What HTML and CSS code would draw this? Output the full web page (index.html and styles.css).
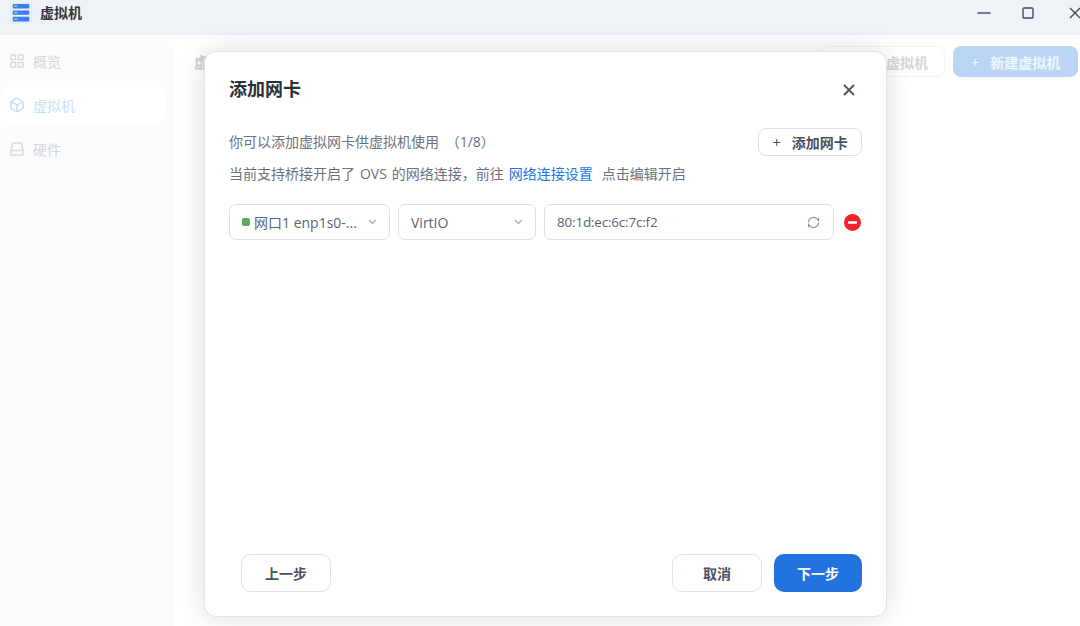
FILE: index.html
```html
<!DOCTYPE html>
<html lang="zh-CN">
<head>
<meta charset="utf-8">
<title>虚拟机</title>
<link rel="stylesheet" href="styles.css">
</head>
<body>
<div class="app">
  <header class="titlebar">
    <div class="brand">
      <span class="logo">
        <svg width="24" height="22" viewBox="0 0 24 22"><rect width="24" height="22" rx="5" fill="#e9eff9"/><rect x="3.700" y="2" width="16.600" height="4.400" rx="1" fill="#3f7cf8"/><rect x="3.700" y="8.400" width="16.600" height="4.400" rx="1" fill="#3f7cf8"/><rect x="3.700" y="14.800" width="16.600" height="4.800" rx="1" fill="#3f7cf8"/><rect x="5" y="3.500" width="3.500" height="1.400" fill="#86d6b0"/><rect x="5" y="9.900" width="3.500" height="1.400" fill="#86d6b0"/><rect x="5" y="16.500" width="3.500" height="1.400" fill="#86d6b0"/></svg>
      </span>
      <span class="brand-name">虚拟机</span>
    </div>
    <div class="win-controls">
      <svg class="win-min" width="14" height="14" viewBox="0 0 14 14"><path d="M0.500 7h13" stroke="#444b55" stroke-width="1.400" fill="none"/></svg>
      <svg class="win-max" width="12" height="12" viewBox="0 0 12 12"><rect x="1" y="1" width="10" height="10" rx="1" stroke="#444b55" stroke-width="1.400" fill="none"/></svg>
      <svg class="win-close" width="12" height="12" viewBox="0 0 12 12"><path d="M1 1l10 10M11 1L1 11" stroke="#444b55" stroke-width="1.400" fill="none"/></svg>
    </div>
  </header>
  <div class="body">
    <nav class="sidebar">
      <a class="nav-item">
        <svg width="14" height="14" viewBox="0 0 14 14" fill="none" stroke="#d8d9db" stroke-width="1.400"><rect x="1" y="1" width="4.600" height="4.600"/><rect x="8.400" y="1" width="4.600" height="4.600"/><rect x="1" y="8.400" width="4.600" height="4.600"/><rect x="8.400" y="8.400" width="4.600" height="4.600"/></svg>
        <span>概览</span>
      </a>
      <a class="nav-item active">
        <svg width="14" height="16" viewBox="0 0 14 16" fill="none" stroke="#c5dcf7" stroke-width="1.400" stroke-linejoin="round"><path d="M7 1l6 3.500v7L7 15l-6-3.500v-7z"/><path d="M1 4.500L7 8l6-3.500M7 8v7"/></svg>
        <span>虚拟机</span>
      </a>
      <a class="nav-item">
        <svg width="14" height="14" viewBox="0 0 14 14" fill="none" stroke="#d8d9db" stroke-width="1.400" stroke-linejoin="round"><path d="M2.500 1h9L13 8.500V13H1V8.500z"/><path d="M1 8.500h12"/></svg>
        <span>硬件</span>
      </a>
    </nav>
    <main class="content">
      <div class="toolbar">
        <span class="page-title">虚拟机</span>
        <div class="toolbar-actions">
          <button class="ghost-btn">导入虚拟机</button>
          <button class="new-btn"><span class="plus">+</span>新建虚拟机</button>
        </div>
      </div>
    </main>
  </div>
  <section class="modal">
    <div class="modal-head">
      <h2>添加网卡</h2>
      <svg class="close" width="12" height="12" viewBox="0 0 12 12"><path d="M1 1l10 10M11 1L1 11" stroke="#4a5361" stroke-width="1.800" fill="none"/></svg>
    </div>
    <div class="intro-row">
      <p class="intro">你可以添加虚拟网卡供虚拟机使用 （1/8）</p>
      <button class="add-btn"><span class="add-plus">+</span>添加网卡</button>
    </div>
    <p class="note">当前支持桥接开启了 OVS 的网络连接，前往 <a class="link">网络连接设置</a> 点击编辑开启</p>
    <div class="nic-row">
      <div class="field field-port">
        <span class="dot"></span><span class="field-text">网口1 enp1s0-...</span>
        <svg class="chev" width="9" height="6" viewBox="0 0 9 6"><path d="M1 1l3.500 3.500L8 1" stroke="#a0a8b4" stroke-width="1.100" fill="none"/></svg>
      </div>
      <div class="field field-model">
        <span class="field-text">VirtIO</span>
        <svg class="chev" width="9" height="6" viewBox="0 0 9 6"><path d="M1 1l3.500 3.500L8 1" stroke="#a0a8b4" stroke-width="1.100" fill="none"/></svg>
      </div>
      <div class="field field-mac">
        <span class="field-text mac-text">80:1d:ec:6c:7c:f2</span>
        <svg class="refresh" width="13" height="13" viewBox="0 0 13 13" fill="none" stroke="#8a9bb0" stroke-width="1.200"><path d="M1.500 6.500a5 5 0 0 1 8.700-3.400L11.500 4.500V1.800"/><path d="M11.500 6.500a5 5 0 0 1-8.700 3.400L1.500 8.500v2.700"/></svg>
      </div>
      <svg class="remove" width="17" height="17" viewBox="0 0 17 17"><circle cx="8.500" cy="8.500" r="8.500" fill="#f5222d"/><rect x="4" y="7.300" width="9" height="2.400" rx="0.600" fill="#fff"/></svg>
    </div>
    <div class="modal-foot">
      <button class="btn">上一步</button>
      <div class="foot-right">
        <button class="btn btn-cancel">取消</button>
        <button class="btn btn-primary">下一步</button>
      </div>
    </div>
  </section>
</div>
</body>
</html>
```
FILE: styles.css
```css
* { box-sizing: border-box; }
html, body { margin: 0; padding: 0; }
body {
  width: 1080px;
  height: 626px;
  overflow: hidden;
  font-family: "Open Sans", "Noto Sans CJK SC", "Noto Sans", sans-serif;
  color: #2d3340;
}
button { font-family: inherit; cursor: pointer; }
p, h2 { margin: 0; }

.app { position: relative; width: 1080px; height: 626px; display: flex; flex-direction: column; background: #fbfcfe; }

.titlebar { height: 35px; flex: none; background: #eff3f8; display: flex; align-items: center; justify-content: space-between; padding: 0 0 9px 9px; }
.brand { display: flex; align-items: center; gap: 7px; }
.logo { display: flex; width: 24px; height: 22px; }
.brand-name { font-size: 14px; font-weight: 700; color: #33373d; margin-bottom: 2px; }
.win-controls { display: flex; align-items: center; }
.win-min { margin-right: 31px; }
.win-max { margin-right: 35px; }
.win-close { margin-right: -1px; }

.body { flex: 1; display: flex; min-height: 0; }
.sidebar { width: 174px; flex: none; padding: 8px 8px 0 0; display: flex; flex-direction: column; gap: 8px; }
.nav-item { height: 36px; display: flex; align-items: center; gap: 9px; padding-left: 10px; font-size: 14px; color: #d6d7d9; }
.nav-item svg { flex: none; }
.nav-item.active { color: #c9dff8; background: #fff; border-radius: 10px; }

.content { flex: 1; background: #fff; border-top-left-radius: 12px; padding: 11px 2px 0 20px; }
.toolbar { display: flex; justify-content: space-between; align-items: center; }
.page-title { font-size: 15px; font-weight: 700; color: #cfd0d2; }
.toolbar-actions { display: flex; gap: 8px; }
.ghost-btn { width: 126px; height: 31px; padding: 0 16px 0 0; border: 1px solid #f2f4f7; border-radius: 8px; background: #fff; color: #d5d6d8; font-size: 14px; font-weight: 700; text-align: right; }
.new-btn { width: 125px; height: 31px; border: 0; border-radius: 8px; background: #bcd5f5; color: #eef5fd; font-size: 14px; font-weight: 700; display: flex; align-items: center; justify-content: center; gap: 11px; padding: 0; }
.plus { font-weight: 400; font-size: 15px; }

.modal { position: absolute; left: 204px; top: 51px; width: 683px; height: 566px; background: #fff; border-radius: 12px; border: 1px solid #e3e4e7; box-shadow: 0 0 30px rgba(0, 0, 0, 0.13); display: flex; flex-direction: column; padding: 0 24px; }
.modal-head { display: flex; justify-content: space-between; align-items: center; height: 36px; margin-top: 18px; }
.modal-head h2 { font-size: 18px; font-weight: 700; color: #2b2f36; }
.close { margin: 4px 7px 0 0; }
.intro-row { display: flex; justify-content: space-between; align-items: center; margin-top: 22px; height: 28px; }
.intro { font-size: 14px; color: #6b7280; margin-bottom: 2px; word-spacing: 3px; }
.add-btn { width: 104px; height: 28px; border: 1px solid #d9e1ec; border-radius: 8px; background: #fff; color: #4a5361; font-size: 14px; font-weight: 700; display: flex; align-items: center; justify-content: center; gap: 11px; padding: 0; }
.add-plus { font-weight: 400; font-size: 15px; }
.note { margin-top: 4px; font-size: 14px; color: #6b7280; height: 28px; line-height: 28px; word-spacing: 1.340px; }
.link { color: #2277e0; margin-right: 4px; }
.nic-row { display: flex; align-items: center; gap: 8px; margin-top: 16px; }
.field { height: 36px; border: 1px solid #d9e1ec; border-radius: 7px; background: #fff; display: flex; align-items: center; font-size: 14px; color: #5c6470; padding: 0 12px; }
.field-port { width: 161px; }
.field-model { width: 138px; justify-content: space-between; }
.field-mac { width: 290px; justify-content: space-between; }
.field-text { white-space: nowrap; }
.mac-text { font-size: 13.500px; letter-spacing: -0.200px; }
.field-port .field-text { margin-left: 4px; }
.field-port .chev { margin-left: auto; }
.dot { width: 8px; height: 8px; border-radius: 2px; background: #5cad5f; flex: none; }
.refresh { margin-right: 1px; }
.remove { margin-left: 2px; }
.modal-foot { margin-top: auto; margin-bottom: 24px; display: flex; justify-content: space-between; padding-left: 12px; }
.foot-right { display: flex; gap: 12px; }
.btn { width: 90px; height: 38px; border: 1px solid #dbe3ee; border-radius: 10px; background: #fff; color: #4a5361; font-size: 14px; font-weight: 700; padding: 0; }
.btn-primary { width: 88px; border: 0; background: #2174e0; color: #fff; }
```
